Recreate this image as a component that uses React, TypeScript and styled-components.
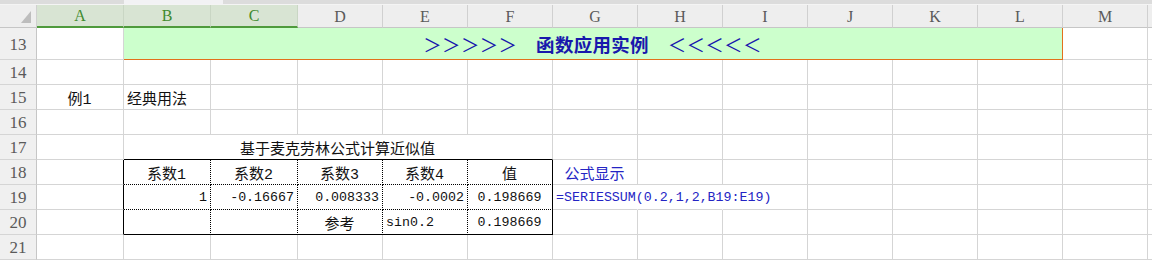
import React from "react";
import styled, { createGlobalStyle } from "styled-components";

const GlobalStyle = createGlobalStyle`
  * { box-sizing: border-box; }
  body { margin: 0; background: #fff; }
`

type Edge = "grid" | "solid" | "dot" | "none" | "accent"
type Align = "left" | "center" | "right"
type Tone = "plain" | "blue"

const edge = (e?: Edge) => {
  if (e === "solid") return "1px solid #000"
  if (e === "dot") return "1px dotted #000"
  if (e === "none") return "1px solid transparent"
  if (e === "accent") return "1px solid #e2701c"
  return "1px solid #d5d5d5"
}

const justify = (a?: Align) => a === "right" ? "flex-end" : a === "center" ? "center" : "flex-start"

const Sheet = styled.div`
  display: grid;
  grid-template-columns: 37px 87px 87px 87px repeat(10, 85px) 1fr;
  grid-template-rows: 5px 23px 32px repeat(8, 25px);
  width: 1152px;
  height: 261px;
  overflow: hidden;
  background: #fff;
  font-family: "Liberation Mono", "Noto Sans CJK SC", monospace;
`

const TopStrip = styled.div`
  grid-column: 1 / -1;
  display: flex;
  padding-left: 124px;
  background: #dcdcdc;
  border-bottom: 1px solid #f4f4f4;
`

// sheet tab, its label is scrolled out of view in the screenshot
const Tab = styled.div`
  width: 99px;
  background: #f2f2f4;
`

const Corner = styled.div`
  display: flex;
  justify-content: flex-end;
  align-items: flex-end;
  padding: 0 5px 4px 0;
  background: #eeeeee;
  border-right: 1px solid #d0d0d0;
  border-bottom: 1px solid #c6c6c6;
`

const ColHead = styled.div<{ $sel?: boolean }>`
  display: flex;
  justify-content: center;
  align-items: center;
  background: ${p => p.$sel ? "#d8e4d3" : "#eeeeee"};
  color: ${p => p.$sel ? "#3f8a2e" : "#5a5a5a"};
  border-right: 1px solid ${p => p.$sel ? "#c9d6c4" : "#d0d0d0"};
  border-bottom: ${p => p.$sel ? "2px solid #4f9a3c" : "1px solid #c6c6c6"};
  font-family: "Liberation Serif", serif;
  font-size: 16px;
  padding-top: 1px;
`

const RowHead = styled.div`
  display: flex;
  justify-content: center;
  align-items: center;
  background: #f0f0f0;
  color: #5a5a5a;
  border-right: 1px solid #c6c6c6;
  border-bottom: 1px solid #d5d5d5;
  font-family: "Liberation Serif", serif;
  font-size: 17px;
  padding-top: 2px;
`

const Cell = styled.div<{ $span?: number; $r?: Edge; $b?: Edge; $al?: Align; $tone?: Tone; $num?: boolean; $bg?: string }>`
  grid-column: span ${p => p.$span || 1};
  display: flex;
  align-items: center;
  justify-content: ${p => justify(p.$al)};
  padding: 1px 3px 0 ${p => p.$al === "left" ? "3px" : "2px"};
  background: ${p => p.$bg || "transparent"};
  border-right: ${p => edge(p.$r)};
  border-bottom: ${p => edge(p.$b)};
  white-space: nowrap;
  overflow: visible;
  min-width: 0;
  color: ${p => p.$tone === "blue" ? "#2424c4" : "#111"};
  font-size: ${p => p.$num ? "13.3px" : "15px"};
`

const Banner = styled.span`
  font-family: "Noto Sans CJK SC", sans-serif;
  font-size: 18.5px;
  color: #1818ac;
  letter-spacing: 0.3px;
`

const Strong = styled.span`
  font-weight: 700;
`

const TriangleIcon = () => (
  <svg width="10" height="12" viewBox="0 0 10 12">
    <polygon points="10,0 10,12 0,12" fill="#bdbdbd" />
  </svg>
)

type Spec = { t?: React.ReactNode; span?: number; r?: Edge; b?: Edge; al?: Align; tone?: Tone; num?: boolean; bg?: string }

const TOTAL = 14
const LETTERS = ["A", "B", "C", "D", "E", "F", "G", "H", "I", "J", "K", "L", "M", ""]

const fill = (specs: Spec[]) => {
  const out = [...specs]
  let used = out.reduce((s, c) => s + (c.span || 1), 0)
  while (used < TOTAL) {
    out.push({})
    used++
  }
  return out
}

const title = (
  <Banner>
    ＞＞＞＞＞　<Strong>函数应用实例</Strong>　＜＜＜＜＜
  </Banner>
)

const rows: { n: number; cells: Spec[] }[] = [
  { n: 13, cells: fill([{}, { t: title, span: 11, al: "center", bg: "#ccffcc", r: "accent", b: "accent" }]) },
  { n: 14, cells: fill([]) },
  { n: 15, cells: fill([{ t: "例1", al: "center" }, { t: "经典用法", al: "left" }]) },
  { n: 16, cells: fill([]) },
  { n: 17, cells: fill([{}, { t: "基于麦克劳林公式计算近似值", span: 5, al: "center", b: "solid" }]) },
  {
    n: 18, cells: fill([
      { r: "solid" },
      { t: "系数1", al: "center", r: "dot", b: "dot" },
      { t: "系数2", al: "center", r: "dot", b: "dot" },
      { t: "系数3", al: "center", r: "dot", b: "dot" },
      { t: "系数4", al: "center", r: "dot", b: "dot" },
      { t: "值", al: "center", r: "solid", b: "dot" },
      { t: "公式显示", al: "center", tone: "blue" },
    ])
  },
  {
    n: 19, cells: fill([
      { r: "solid" },
      { t: "1", al: "right", num: true, r: "dot", b: "dot" },
      { t: "-0.16667", al: "right", num: true, r: "dot", b: "dot" },
      { t: "0.008333", al: "right", num: true, r: "dot", b: "dot" },
      { t: "-0.0002", al: "right", num: true, r: "dot", b: "dot" },
      { t: "0.198669", al: "center", num: true, r: "solid", b: "dot" },
      { t: "=SERIESSUM(0.2,1,2,B19:E19)", al: "left", num: true, tone: "blue", r: "none" },
      { r: "none" },
    ])
  },
  {
    n: 20, cells: fill([
      { r: "solid" },
      { r: "dot", b: "solid" },
      { r: "dot", b: "solid" },
      { t: "参考", al: "center", r: "dot", b: "solid" },
      { t: "sin0.2", al: "left", num: true, r: "dot", b: "solid" },
      { t: "0.198669", al: "center", num: true, r: "solid", b: "solid" },
    ])
  },
  { n: 21, cells: fill([]) },
]

export default function App() {
  return (
    <>
      <GlobalStyle />
      <Sheet>
        <TopStrip>
          <Tab />
        </TopStrip>
        <Corner><TriangleIcon /></Corner>
        {LETTERS.map((l, i) => (
          <ColHead key={i} $sel={i < 3}>{l}</ColHead>
        ))}
        {rows.map(row => (
          <React.Fragment key={row.n}>
            <RowHead>{row.n}</RowHead>
            {row.cells.map((c, i) => (
              <Cell
                key={i}
                $span={c.span}
                $r={c.r}
                $b={c.b}
                $al={c.al}
                $tone={c.tone}
                $num={c.num}
                $bg={c.bg}
              >
                {c.t}
              </Cell>
            ))}
          </React.Fragment>
        ))}
      </Sheet>
    </>
  )
}
